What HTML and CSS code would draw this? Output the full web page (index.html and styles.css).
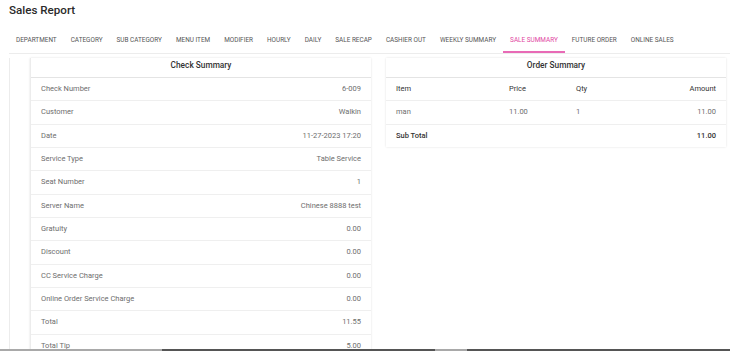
FILE: index.html
```html
<html>
<head>
<meta name="viewport" content="width=device-width, initial-scale=1.0" />
<link rel="stylesheet" href="styles.css">
</head>
<body>
<div class="page">
  <h1 class="title">Sales Report</h1>
  <div class="tabs">
    <span class="tab">DEPARTMENT</span>
    <span class="tab">CATEGORY</span>
    <span class="tab">SUB CATEGORY</span>
    <span class="tab">MENU ITEM</span>
    <span class="tab">MODIFIER</span>
    <span class="tab">HOURLY</span>
    <span class="tab">DAILY</span>
    <span class="tab">SALE RECAP</span>
    <span class="tab">CASHIER OUT</span>
    <span class="tab">WEEKLY SUMMARY</span>
    <span class="tab active">SALE SUMMARY</span>
    <span class="tab">FUTURE ORDER</span>
    <span class="tab">ONLINE SALES</span>
  </div>
  <div class="content">
    <div class="rail">
      <div class="card check">
        <div class="card_head">Check Summary</div>
        <div class="row"><span>Check Number</span><span>6-009</span></div>
        <div class="row"><span>Customer</span><span>Walkin</span></div>
        <div class="row"><span>Date</span><span>11-27-2023 17:20</span></div>
        <div class="row"><span>Service Type</span><span>Table Service</span></div>
        <div class="row"><span>Seat Number</span><span>1</span></div>
        <div class="row"><span>Server Name</span><span>Chinese 8888 test</span></div>
        <div class="row"><span>Gratuity</span><span>0.00</span></div>
        <div class="row"><span>Discount</span><span>0.00</span></div>
        <div class="row"><span>CC Service Charge</span><span>0.00</span></div>
        <div class="row"><span>Online Order Service Charge</span><span>0.00</span></div>
        <div class="row"><span>Total</span><span>11.55</span></div>
        <div class="row"><span>Total Tip</span><span>5.00</span></div>
      </div>
    </div>
    <div class="card order">
      <div class="card_head">Order Summary</div>
      <div class="orow ohead"><span>Item</span><span>Price</span><span>Qty</span><span class="amt">Amount</span></div>
      <div class="orow"><span>man</span><span>11.00</span><span>1</span><span class="amt">11.00</span></div>
      <div class="orow osub"><span>Sub Total</span><span></span><span></span><span class="amt">11.00</span></div>
    </div>
  </div>
</div>
<div class="bottombar">
  <span class="seg light s1"></span>
  <span class="seg dark s2"></span>
  <span class="seg light s3"></span>
  <span class="seg dark s4"></span>
</div>
</body>
</html>
```
FILE: styles.css
```css
html, body {
  margin: 0;
  height: 100%;
  overflow: hidden;
  background: #fff;
  font-family: Roboto, "Liberation Sans", sans-serif;
}
.page {
  padding-left: 9px;
  height: 349px;
  overflow: hidden;
}
.title {
  margin: 0;
  padding-top: 3px;
  font-size: 11.6px;
  font-weight: 500;
  color: #2a2a2a;
  height: 23px;
  line-height: 15px;
}
.tabs {
  display: flex;
  border-bottom: 1px solid #ececec;
  padding-top: 3px;
  box-sizing: border-box;
  height: 28px;
}
.tab {
  padding: 0 7px;
  font-size: 6.42px;
  color: #555;
  line-height: 22px;
  height: 24px;
  box-sizing: border-box;
  white-space: nowrap;
  border-bottom: 2px solid transparent;
}
.tab.active {
  color: #e1469f;
  border-bottom-color: #e86ab6;
}
.content {
  display: flex;
  align-items: flex-start;
  padding-top: 4px;
}
.rail {
  border-left: 1px solid #ececec;
  padding-left: 15px;
}
.rail .card {
  border-left: 1px solid #ececec;
}
.card {
  background: #fff;
  box-shadow: 0 0 2px rgba(0,0,0,0.12);
}
.check {
  width: 340px;
  margin-left: 5px;
}
.order {
  width: 340px;
  margin-left: 15px;
}
.card_head {
  height: 19px;
  line-height: 15px;
  text-align: center;
  font-size: 8.3px;
  font-weight: 500;
  color: #333;
  border-bottom: 1px solid #e4e4e4;
}
.row {
  display: flex;
  justify-content: space-between;
  height: 22.35px;
  line-height: 22px;
  padding: 0 10px;
  font-size: 7.5px;
  color: #6e6e6e;
  border-bottom: 1px solid #efefef;
}
.orow {
  display: grid;
  grid-template-columns: 113px 67px 1fr 80px;
  height: 22.35px;
  line-height: 22px;
  padding: 0 10px;
  font-size: 7.5px;
  color: #6e6e6e;
  border-bottom: 1px solid #efefef;
}
.orow:last-child {
  border-bottom: none;
}
.ohead, .osub {
  color: #333;
}
.osub {
  font-weight: 500;
}
.amt {
  text-align: right;
}
.bottombar {
  display: flex;
  height: 2px;
}
.seg {
  display: block;
  height: 2px;
}
.light { background: #a9a9a9; }
.dark { background: #555; }
.s1 { width: 162px; }
.s2 { width: 273px; }
.s3 { width: 32px; }
.s4 { flex: 1; }
```
